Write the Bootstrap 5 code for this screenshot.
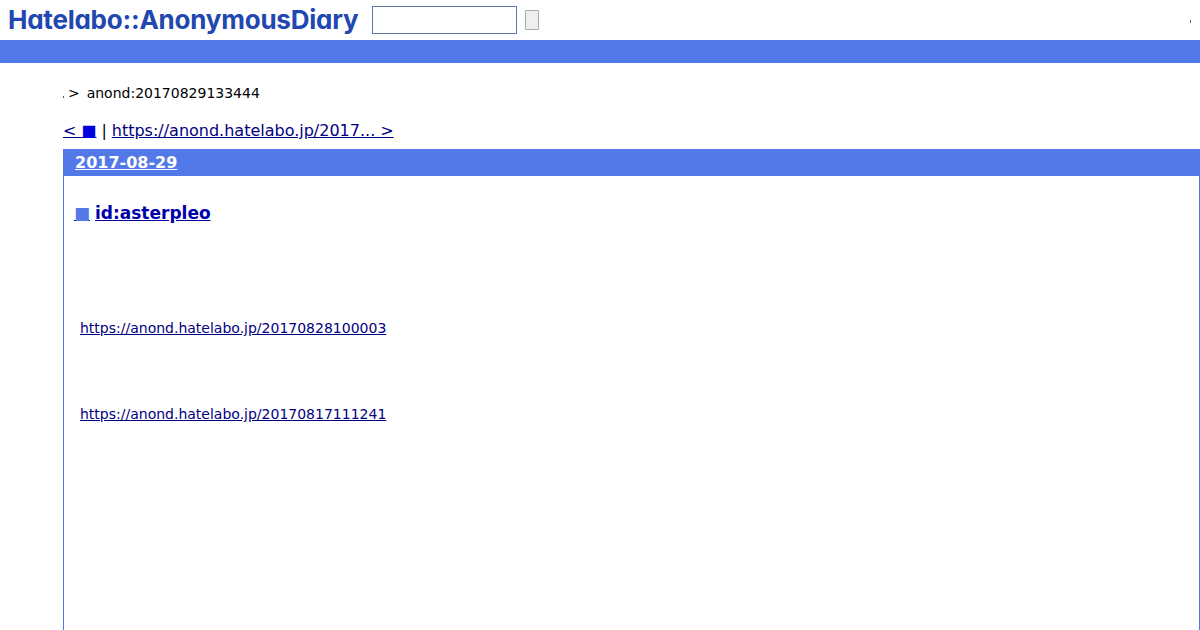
<!DOCTYPE html>
<html lang="ja">
<head>
  <meta charset="UTF-8">
  <title>anond:20170829133444</title>
  <link href="https://cdn.jsdelivr.net/npm/bootstrap@5.3.0/dist/css/bootstrap.min.css" rel="stylesheet">
  <style>
    body { font-family: "DejaVu Sans", sans-serif; font-size: 16px; color: #000; overflow: hidden; height: 630px; }
    a { color: #000080; }
    .site-head { height: 40px; padding-left: 8px; }
    .site-logo { font-family: "Inter", "Lato", sans-serif; font-feature-settings: "cv11" 1; font-weight: 700; font-size: 26px; letter-spacing: -0.23px; line-height: 40px; color: #2147b0; width: 364px; white-space: nowrap; text-decoration: none; }
    .search-box { width: 145px; height: 28px; border: 1px solid #5a7ba8; background: #fff; padding: 0; border-radius: 0; }
    .search-btn { width: 14px; height: 20px; padding: 0; margin-left: 8px; background: #efefef; border: 1px solid #aaa; border-radius: 1px; }
    .head-dot { width: 1px; height: 3px; background: #666; margin-left: auto; margin-right: 9px; margin-top: 2px; }
    .blue-bar { height: 23px; background: #5279e7; }
    .page-body { padding: 21px 0 0 63px; }
    .crumbs { font-size: 14px; line-height: 18px; word-spacing: -1px; }
    .crumb-dot { width: 1px; height: 2px; background: #555; margin-top: 12px; margin-right: 4px; }
    .pager { margin-top: 19px; line-height: 19px; height: 19px; white-space: nowrap; word-spacing: -0.15px; }
    .pager-mark { color: #0000e0; }
    .day-box { margin-top: 9px; border: 1px solid #5279e7; border-top: 0; border-bottom: 0; height: 482px; }
    .day-title { height: 27px; margin: 0 -1px; background: #5279e7; padding-left: 12px; font-size: 16px; font-weight: 700; line-height: 27px; }
    .day-title a { color: #fff; }
    .entry-title { margin: 26px 0 0 10px; font-size: 17px; font-weight: 700; line-height: 22px; word-spacing: -1px; }
    .entry-title a { color: #0000aa; }
    .entry-mark { color: #5279e7; }
    .entry-link { margin: 0 0 0 16px; font-size: 14px; line-height: 18px; }
    .link-first { margin-top: 95px; }
    .link-next { margin-top: 68px; }
  </style>
</head>
<body>
  <header class="site-head d-flex align-items-center">
    <a class="site-logo" href="#">Hatelabo::AnonymousDiary</a>
    <input class="search-box" type="text" aria-label="search">
    <button class="search-btn" type="button" aria-label="search"></button>
    <span class="head-dot"></span>
  </header>
  <div class="blue-bar"></div>

  <main class="page-body">
    <div class="crumbs d-flex">
      <span class="crumb-dot"></span>
      <span>&gt;&nbsp; anond:20170829133444</span>
    </div>
    <div class="pager">
      <a href="#">&lt; <span class="pager-mark">■</span></a> | <a href="#">https://anond.hatelabo.jp/2017... &gt;</a>
    </div>
    <section class="day-box">
      <h1 class="day-title"><a href="#">2017-08-29</a></h1>
      <h2 class="entry-title"><a href="#"><span class="entry-mark">■</span></a> <a href="#">id:asterpleo</a></h2>
      <p class="entry-link link-first"><a href="#">https://anond.hatelabo.jp/20170828100003</a></p>
      <p class="entry-link link-next"><a href="#">https://anond.hatelabo.jp/20170817111241</a></p>
    </section>
  </main>

  <script src="https://cdn.jsdelivr.net/npm/bootstrap@5.3.0/dist/js/bootstrap.bundle.min.js"></script>
</body>
</html>
